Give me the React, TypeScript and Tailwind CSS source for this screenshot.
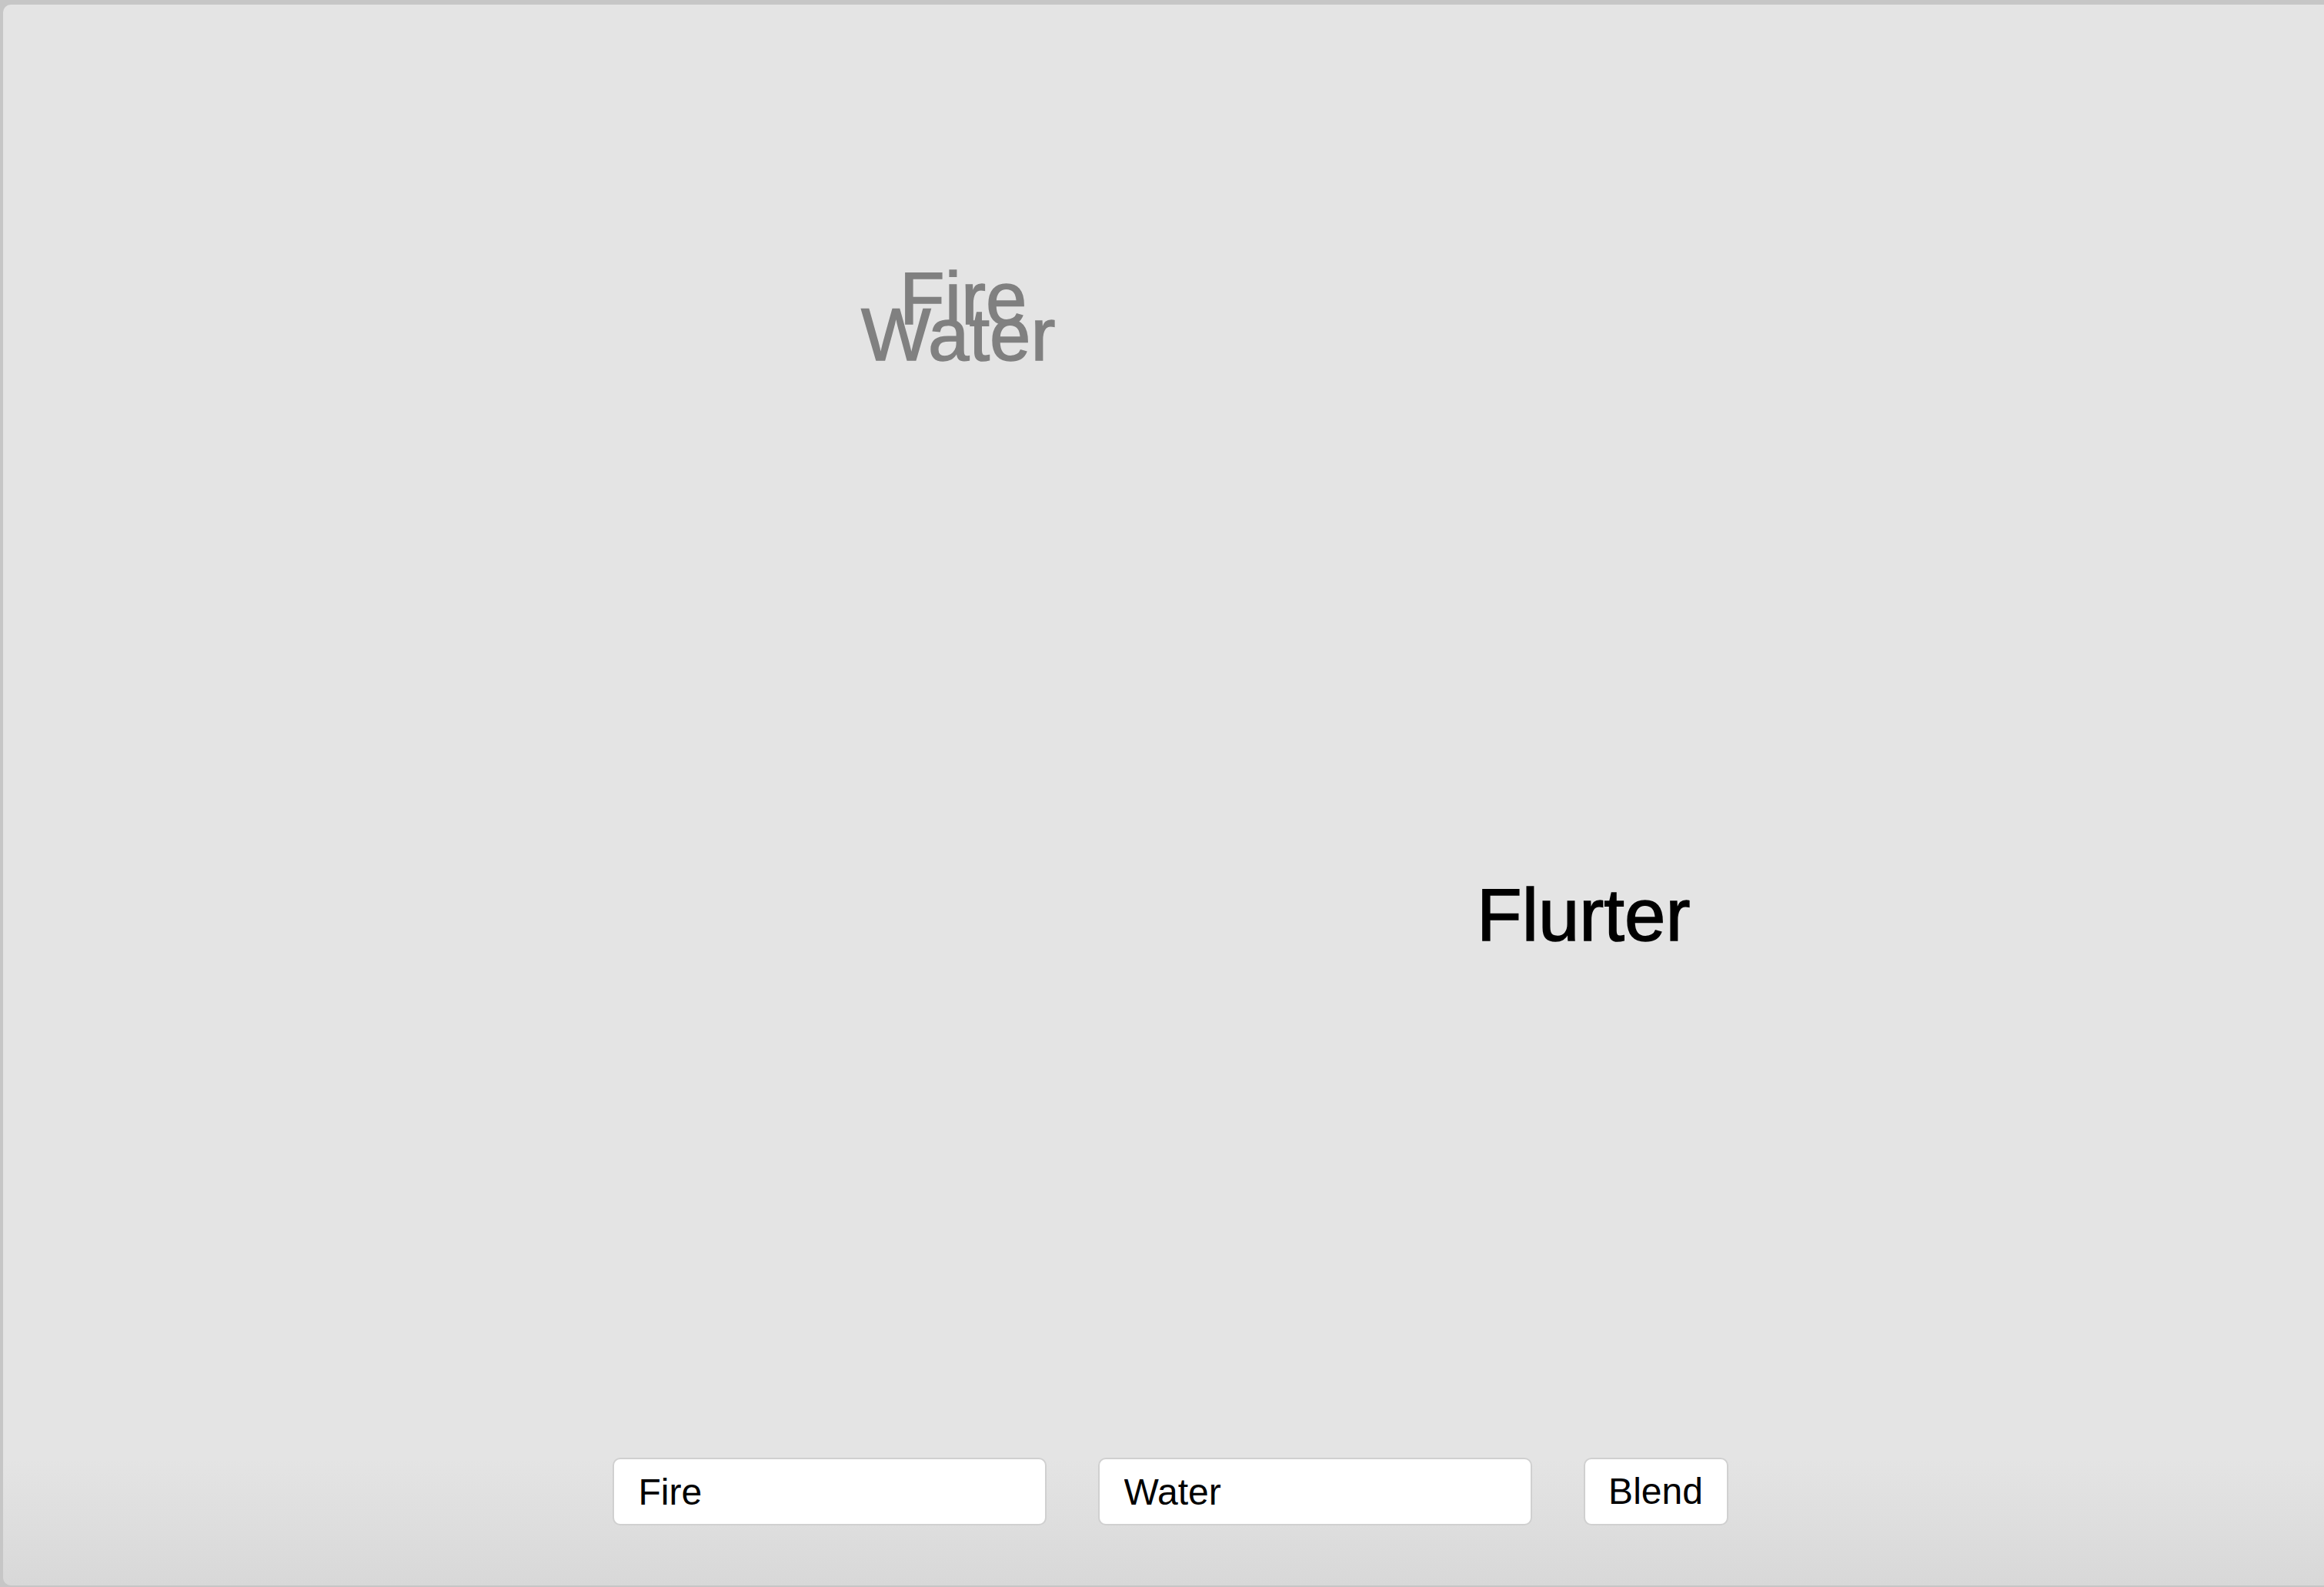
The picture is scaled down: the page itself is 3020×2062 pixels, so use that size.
import { useState } from "react";

const font = { fontFamily: '"Liberation Sans", Arial, sans-serif' };

export default function App() {
  const [a, setA] = useState("Fire");
  const [b, setB] = useState("Water");

  return (
    <div className="h-[2062px] w-[3020px] overflow-hidden bg-[#c6c6c6] pl-[4px] pt-[6px]" style={font}>
      <div className="flex h-[2054px] w-[3030px] flex-col rounded-l-[10px] bg-[linear-gradient(to_bottom,#e4e4e4_92%,#d8d8d8)]">
        {/* canvas */}
        <div className="relative flex-1">
          <span className="absolute left-[1165px] top-[334px] text-[96px] leading-none text-[#808080] [-webkit-text-stroke:1.5px_#808080]">Fire</span>
          <span className="absolute left-[1115px] top-[381px] text-[96px] leading-none text-[#808080] [-webkit-text-stroke:1.5px_#808080]">Water</span>
          <span className="absolute left-[1915px] top-[1135px] text-[96px] leading-none text-black [-webkit-text-stroke:1.5px_#000]">Flurter</span>
        </div>

        <div className="flex justify-center pb-[78px] pl-[3px]">
          <div className="flex gap-[67px]">
            <input
              value={a}
              onChange={(e) => setA(e.target.value)}
              className="h-[88px] w-[564px] rounded-[10px] border-2 border-[#d0d0d0] bg-white px-[32px] text-[48px] text-black outline-none"
              style={font}
            />
            <input
              value={b}
              onChange={(e) => setB(e.target.value)}
              className="h-[88px] w-[564px] rounded-[10px] border-2 border-[#d0d0d0] bg-white px-[32px] text-[48px] text-black outline-none"
              style={font}
            />
            <button
              className="h-[88px] w-[188px] rounded-[10px] border-2 border-[#d0d0d0] bg-white text-[48px] text-black"
              style={font}
            >
              Blend
            </button>
          </div>
        </div>
      </div>
    </div>
  );
}
